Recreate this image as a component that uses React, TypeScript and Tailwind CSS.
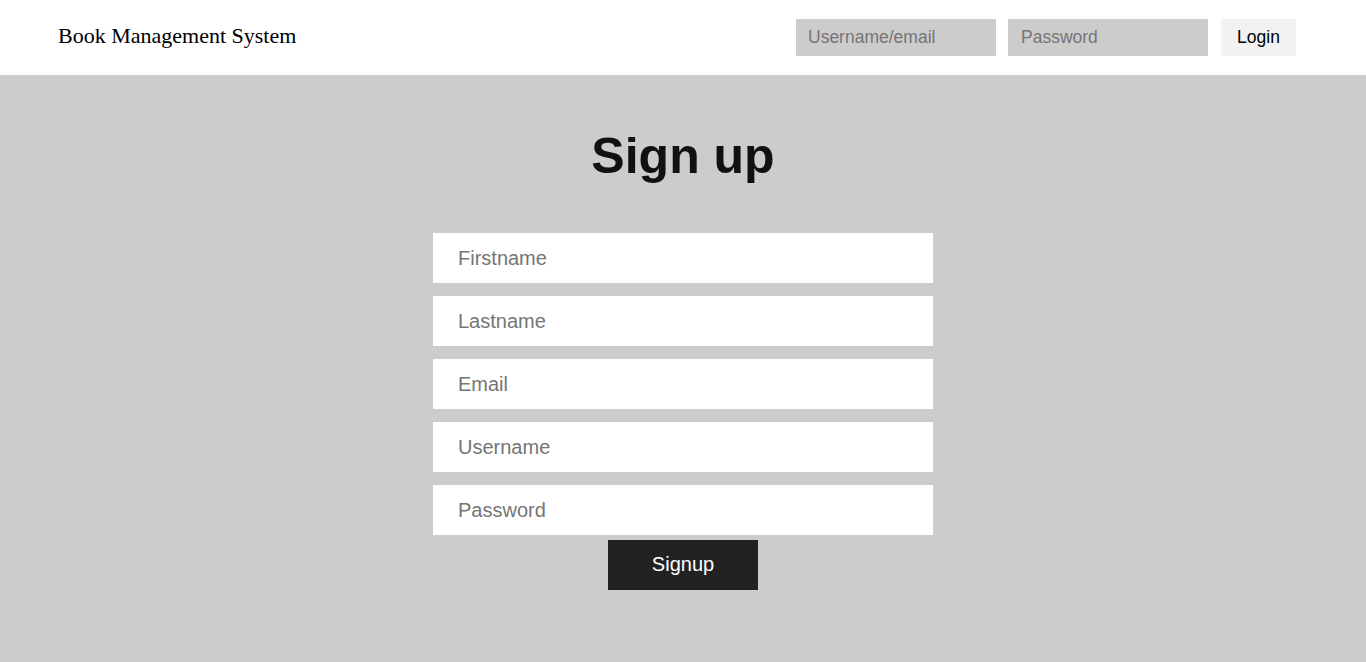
import React from "react";

const fields = ["Firstname", "Lastname", "Email", "Username", "Password"];

const App = () => {
  return (
    <div className="min-h-[662px] flex flex-col bg-[#cccccc] font-['Liberation_Sans',Arial,sans-serif]">
      <header className="h-[75px] bg-white flex items-center justify-between pl-[58px] pr-[70px]">
        <h2 className="font-['Liberation_Serif','Times_New_Roman',serif] text-[22px] leading-[26px] text-black mb-[4px]">
          Book Management System
        </h2>
        <div className="flex items-center h-[37px]">
          <input
            type="text"
            placeholder="Username/email"
            className="w-[200px] h-[37px] bg-[#cccccc] px-[12px] text-[17.5px] outline-none placeholder:text-[#757575]"
          />
          <input
            type="password"
            placeholder="Password"
            className="w-[200px] h-[37px] bg-[#cccccc] px-[13px] ml-[12px] text-[17.5px] outline-none placeholder:text-[#757575]"
          />
          <button className="w-[75px] h-[37px] bg-[#f2f2f2] ml-[13px] text-[17.5px] text-black">
            Login
          </button>
        </div>
      </header>
      <main className="flex flex-col items-center pt-[53px]">
        <h1 className="text-[50px] leading-[57px] font-bold text-[#111111]">
          Sign up
        </h1>
        <div className="flex flex-col gap-[13px] mt-[48px]">
          {fields.map((f) => (
            <input
              key={f}
              type={f === "Password" ? "password" : "text"}
              placeholder={f}
              className="w-[500px] h-[50px] bg-white px-[25px] text-[20px] outline-none placeholder:text-[#757575]"
            />
          ))}
        </div>
        <button className="w-[150px] h-[50px] mt-[5px] pb-[2px] bg-[#222222] text-white text-[20px]">
          Signup
        </button>
      </main>
    </div>
  );
};

export default App;
